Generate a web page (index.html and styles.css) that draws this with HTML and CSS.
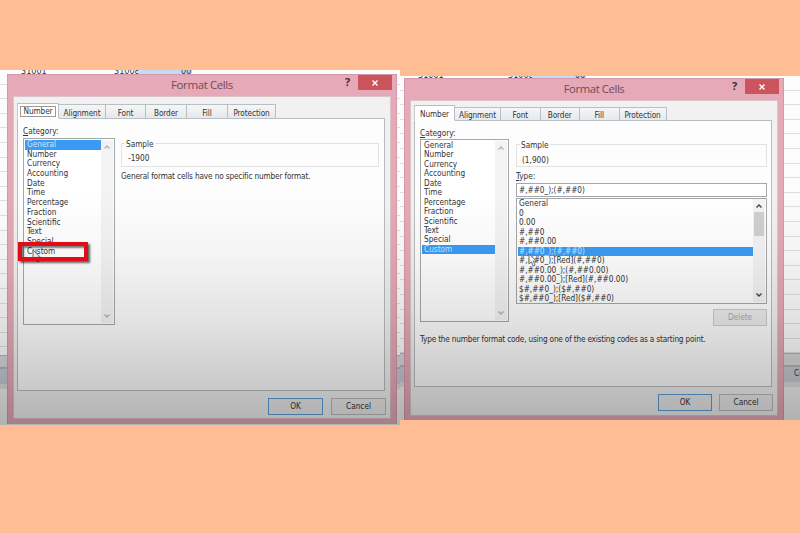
FILE: index.html
```
<!DOCTYPE html>
<html lang="en">
<head>
    <meta charset="UTF-8">
    <title>Format Cells</title>
    <link rel="stylesheet" href="styles.css">
</head>
<body>
    <div class="shot shot-left">
        <div class="sheet-row"><span>31001</span><span>31008</span><span class="cell-selected">00</span></div>
        <div class="sheet-footer"></div>
        <div class="dialog">
            <div class="title-bar">
                <span class="title">Format Cells</span>
                <span class="help">?</span>
                <span class="close"><svg viewBox="0 0 8 8"><path d="M1.5 1.5l5 5M6.5 1.5l-5 5"/></svg></span>
            </div>
            <div class="dialog-body">
                <div class="tabs">
                    <div class="tab active focused"><span>Number</span></div>
                    <div class="tab">Alignment</div>
                    <div class="tab">Font</div>
                    <div class="tab">Border</div>
                    <div class="tab">Fill</div>
                    <div class="tab">Protection</div>
                </div>
                <div class="panel">
                    <div class="category">
                        <div class="label"><u>C</u>ategory:</div>
                        <div class="list">
                            <div class="items">
                                <div class="item selected">General</div>
                                <div class="item">Number</div>
                                <div class="item">Currency</div>
                                <div class="item">Accounting</div>
                                <div class="item">Date</div>
                                <div class="item">Time</div>
                                <div class="item">Percentage</div>
                                <div class="item">Fraction</div>
                                <div class="item">Scientific</div>
                                <div class="item">Text</div>
                                <div class="item">Special</div>
                                <div class="item">Custom</div>
                            </div>
                            <div class="scrollbar disabled">
                                <svg viewBox="0 0 8 6"><path d="M1.5 4.5L4 2l2.5 2.5"/></svg>
                                <svg viewBox="0 0 8 6"><path d="M1.5 1.5L4 4l2.5-2.5"/></svg>
                            </div>
                        </div>
                    </div>
                    <div class="details">
                        <div class="sample"><span class="legend">Sample</span>-1900</div>
                        <div class="description">General format cells have no specific number format.</div>
                    </div>
                </div>
                <div class="buttons">
                    <div class="button default">OK</div>
                    <div class="button">Cancel</div>
                </div>
            </div>
        </div>
        <svg class="cursor cursor-faint" viewBox="0 0 10 15"><path d="M1 1v10l2.4-2.2L5.2 13l1.9-.8-1.8-4h3.2z"/></svg>
        <div class="highlight"></div>
    </div>

    <div class="shot shot-right">
        <div class="sheet-row"><span>31001</span><span>31008</span><span class="cell-selected">00</span></div>
        <div class="sheet-footer"><span>Co</span></div>
        <div class="dialog">
            <div class="title-bar">
                <span class="title">Format Cells</span>
                <span class="help">?</span>
                <span class="close"><svg viewBox="0 0 8 8"><path d="M1.5 1.5l5 5M6.5 1.5l-5 5"/></svg></span>
            </div>
            <div class="dialog-body">
                <div class="tabs">
                    <div class="tab active"><span>Number</span></div>
                    <div class="tab">Alignment</div>
                    <div class="tab">Font</div>
                    <div class="tab">Border</div>
                    <div class="tab">Fill</div>
                    <div class="tab">Protection</div>
                </div>
                <div class="panel">
                    <div class="category">
                        <div class="label"><u>C</u>ategory:</div>
                        <div class="list">
                            <div class="items">
                                <div class="item">General</div>
                                <div class="item">Number</div>
                                <div class="item">Currency</div>
                                <div class="item">Accounting</div>
                                <div class="item">Date</div>
                                <div class="item">Time</div>
                                <div class="item">Percentage</div>
                                <div class="item">Fraction</div>
                                <div class="item">Scientific</div>
                                <div class="item">Text</div>
                                <div class="item">Special</div>
                                <div class="item selected">Custom</div>
                            </div>
                            <div class="scrollbar disabled">
                                <svg viewBox="0 0 8 6"><path d="M1.5 4.5L4 2l2.5 2.5"/></svg>
                                <svg viewBox="0 0 8 6"><path d="M1.5 1.5L4 4l2.5-2.5"/></svg>
                            </div>
                        </div>
                    </div>
                    <div class="details">
                        <div class="sample"><span class="legend">Sample</span>(1,900)</div>
                        <div class="type-label"><u>T</u>ype:</div>
                        <div class="type-input">#,##0_);(#,##0)</div>
                        <div class="list type-list">
                            <div class="items">
                                <div class="item">General</div>
                                <div class="item">0</div>
                                <div class="item">0.00</div>
                                <div class="item">#,##0</div>
                                <div class="item">#,##0.00</div>
                                <div class="item selected">#,##0_);(#,##0)</div>
                                <div class="item">#,##0_);[Red](#,##0)</div>
                                <div class="item">#,##0.00_);(#,##0.00)</div>
                                <div class="item">#,##0.00_);[Red](#,##0.00)</div>
                                <div class="item">$#,##0_);($#,##0)</div>
                                <div class="item">$#,##0_);[Red]($#,##0)</div>
                            </div>
                            <div class="scrollbar">
                                <svg viewBox="0 0 8 6"><path d="M1.5 4.5L4 2l2.5 2.5"/></svg>
                                <div class="thumb"></div>
                                <svg viewBox="0 0 8 6"><path d="M1.5 1.5L4 4l2.5-2.5"/></svg>
                            </div>
                        </div>
                        <div class="button delete">Delete</div>
                    </div>
                    <div class="description">Type the number format code, using one of the existing codes as a starting point.</div>
                </div>
                <div class="buttons">
                    <div class="button default">OK</div>
                    <div class="button">Cancel</div>
                </div>
            </div>
        </div>
        <svg class="cursor" viewBox="0 0 10 15"><path d="M1 1v10l2.4-2.2L5.2 13l1.9-.8-1.8-4h3.2z"/></svg>
    </div>
</body>
</html>
```
FILE: styles.css
```
* {
    box-sizing: border-box;
}

body {
    margin: 0;
    height: 533px;
    display: flex;
    align-items: flex-start;
    overflow: hidden;
    background-color: #ffbd94;
    color: #333;
    font-family: "DejaVu Sans Condensed", "DejaVu Sans", sans-serif;
    font-stretch: condensed;
    font-size: 8.2px;
    line-height: 10px;
    white-space: nowrap;
}

/* Each shot is a dialog over a strip of spreadsheet */
.shot {
    position: relative;
    width: 400px;
    overflow: hidden;
    background: repeating-linear-gradient(#fcfcfc 0 13.6px, #dedede 13.6px 14.6px);
}

.shot-left {
    height: 355px;
    margin-top: 70px;
    padding: 4px 3px 1px 7px;
}

.shot-right {
    height: 344px;
    margin-top: 76px;
    padding: 2px 16px 0 4px;
}

/* Darkening towards the bottom */
.shot::after {
    content: "";
    position: absolute;
    inset: 0;
    background: linear-gradient(transparent 35%, rgba(0, 0, 0, 0.035) 52%, rgba(0, 0, 0, 0.1) 70%, rgba(0, 0, 0, 0.2) 89%, rgba(0, 0, 0, 0.26) 100%);
}

.sheet-row {
    position: absolute;
    top: -4px;
    left: 0;
    width: 400px;
    display: flex;
    padding-left: 21px;
    font-size: 9px;
}

.shot-right .sheet-row {
    top: -6px;
    padding-left: 18px;
}

.sheet-row span {
    width: 93px;
}

.shot-right .sheet-row span {
    width: 90px;
}

.sheet-row span:nth-child(2),
.shot-right .sheet-row span:nth-child(2) {
    width: 24px;
}

.sheet-row .cell-selected,
.shot-right .sheet-row .cell-selected {
    width: 54px;
    padding-left: 43px;
    background-color: #c2dcf5;
}

.sheet-footer {
    position: absolute;
    left: 0;
    right: 0;
    top: 285px;
    bottom: 0;
    background: linear-gradient(#b4b4b4 0 1px, #d8d8da 1px 12px, #b0b2b6 12px 14px, #c6cad2 14px 29px, #dcdcdc 29px 34px, #f0f0f0 34px);
}

.shot-right .sheet-footer {
    top: 277px;
    padding: 15px 0 0 394px;
}

.dialog {
    position: relative;
    height: 350px;
    padding: 0 5px 5px;
    background-color: #e5a9b7;
    border: 1px solid #d698a8;
    border-width: 1px 1px 0;
}

.shot-right .dialog {
    height: 342px;
}

.title-bar {
    position: relative;
    height: 21px;
    display: flex;
    justify-content: flex-end;
}

.title {
    position: absolute;
    left: 0;
    right: 0;
    top: 2px;
    text-align: center;
    color: #704c57;
    font: 11.5px/16px "Open Sans", sans-serif;
    letter-spacing: -0.4px;
}

.help {
    width: 13px;
    color: #3c2d32;
    font: bold 11px/14px "Open Sans", sans-serif;
}

.close {
    width: 34px;
    height: 15px;
    margin-right: -1px;
    padding: 4px 13px;
    background-color: #cb545d;
}

.close svg {
    display: block;
    width: 8px;
    height: 8px;
    stroke: #fff;
    stroke-width: 1.4;
}

.dialog-body {
    height: 323px;
    padding: 6px 5px 0 3px;
    background-color: #f1f1f1;
    border: 1px solid #dcc3ca;
}

.tabs {
    position: relative;
    display: flex;
    align-items: flex-end;
    height: 16px;
    margin-bottom: -1px;
}

.tab {
    width: 41px;
    height: 15px;
    padding-top: 3px;
    text-align: center;
    letter-spacing: -0.1px;
    background: linear-gradient(#f4f6f7, #e6e9ec);
    border: 1px solid #b9bfc4;
    border-left: 0;
}

.tab:nth-child(1) { width: 42px; }
.tab:nth-child(2) { width: 47px; }
.tab:nth-child(3) { width: 40px; }
.tab:nth-child(6) { width: 48px; }

.tab.active {
    height: 16px;
    padding-top: 3px;
    background: #fff;
    border-left: 1px solid #c8c8c8;
    border-bottom-color: #fff;
}

.tab.focused {
    padding: 2px;
}

.tab.focused span {
    display: block;
    height: 11px;
    border: 1px solid #999;
    line-height: 9px;
}

.panel {
    display: flex;
    flex-wrap: wrap;
    align-content: flex-start;
    height: 273px;
    padding: 7px 5px 0;
    background-color: #fdfdfd;
    border: 1px solid #b9bcbe;
}

.category {
    width: 92px;
    margin-right: 6px;
}

.label {
    margin-bottom: 2px;
}

.list {
    display: flex;
    height: 187px;
    padding: 1px;
    background-color: #fff;
    border: 1px solid #a5a8ab;
}

.items {
    flex: 1;
}

.item {
    height: 9.7px;
    padding-left: 2px;
    line-height: 9.7px;
}

.selected {
    background-color: #3a9bf4;
    color: #cfe7fd;
}

.scrollbar {
    display: flex;
    flex-direction: column;
    align-items: center;
    width: 12px;
    padding: 4px 0;
    background-color: #f3f3f3;
}

.scrollbar svg {
    width: 8px;
    height: 6px;
    fill: none;
    stroke: #444;
    stroke-width: 1.4;
}

.scrollbar.disabled svg {
    stroke: #b4b4b4;
}

.scrollbar svg:last-child {
    margin-top: auto;
}

.thumb {
    width: 10px;
    height: 24px;
    margin-top: 3px;
    background-color: #cfcfcf;
}

.details {
    flex: 1;
}

.sample {
    position: relative;
    height: 24px;
    margin-top: 17px;
    padding: 9px 6px 0;
    border: 1px solid #e2e2e2;
}

.legend {
    position: absolute;
    left: 3px;
    top: -5px;
    padding: 0 1px;
    background-color: #fdfdfd;
}

.description {
    margin-top: 4px;
    letter-spacing: -0.15px;
}

.buttons {
    display: flex;
    justify-content: flex-end;
    gap: 8px;
    margin: 7px -1px 0 0;
}

.button {
    width: 55px;
    height: 17px;
    text-align: center;
    line-height: 15px;
    background-color: #ececec;
    border: 1px solid #bcbcbc;
}

.button.default {
    border-color: #5e9edb;
}

.button.delete {
    width: 54px;
    margin: 5px 0 0 auto;
    color: #aaa;
    border-color: #ccc;
}

/* Second dialog is scaled slightly smaller */
.shot-right .title { font-size: 11.3px; }
.shot-right .dialog-body { height: 316px; padding: 4px 5px 0 3px; }
.shot-right .tab { height: 14px; width: 39.5px; padding-top: 2px; }
.shot-right .tab:nth-child(1) { width: 41px; height: 16px; padding-top: 3px; }
.shot-right .tab:nth-child(2) { width: 46px; }
.shot-right .tab:nth-child(6) { width: 47px; }
.shot-right .panel { height: 267px; padding: 7px 4px 0 5px; }
.shot-right .category { width: 89px; margin-right: 7px; }
.shot-right .label { margin-bottom: 1px; }
.shot-right .list { height: 183px; }
.shot-right .item { height: 9.45px; line-height: 9.45px; }
.shot-right .sample { height: 23px; margin-top: 16px; padding: 10px 5px 0; }
.shot-right .button { width: 54px; }
.shot-right .buttons { gap: 7px; }
.shot-right .description { margin-top: 8px; letter-spacing: -0.19px; }

.type-label {
    margin-top: 4px;
}

.type-input {
    height: 14px;
    margin-top: 2px;
    padding-left: 2px;
    line-height: 13px;
    background-color: #fff;
    border: 1px solid #a5a8ab;
}

.shot-right .type-list {
    height: 106px;
    margin-top: 1px;
    padding-top: 0;
}

.shot-right .type-list .item {
    height: 9.5px;
    padding-left: 1px;
    line-height: 9.7px;
}

.highlight {
    position: absolute;
    z-index: 1;
    left: 18px;
    top: 172px;
    width: 70px;
    height: 19px;
    border: 4px solid #e30b17;
    box-shadow: 2px 2px 2px rgba(0, 0, 0, 0.6), inset 2px 2px 2px rgba(0, 0, 0, 0.5);
}

.cursor {
    position: absolute;
    left: 128px;
    top: 177px;
    width: 10px;
    height: 15px;
    fill: #fff;
    stroke: #555;
    stroke-width: 0.8;
}

.cursor-faint {
    left: 32px;
    top: 179px;
    fill: #eee;
}
```
